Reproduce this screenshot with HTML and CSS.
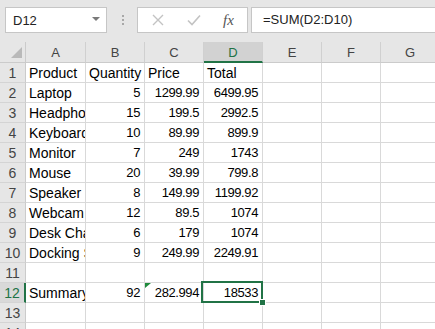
FILE: index.html
```html
<!DOCTYPE html>
<html>
<head>
    <title>Sheet</title>
    <link rel="stylesheet" href="styles.css">
</head>
<body>
    <div class="toolbar">
        <div class="name-box">
            <span>D12</span>
            <span class="drop"></span>
        </div>
        <div class="grip"><i></i><i></i><i></i></div>
        <div class="fx-buttons">
            <svg class="btn" width="14" height="14" viewBox="0 0 14 14"><path d="M2 2 L12 12 M12 2 L2 12" stroke="#c3c3c3" stroke-width="1.4" fill="none"/></svg>
            <svg class="btn" width="16" height="14" viewBox="0 0 16 14"><path d="M2 7.5 L6 11.5 L14 2.5" stroke="#c3c3c3" stroke-width="1.6" fill="none"/></svg>
            <span class="fx">fx</span>
        </div>
        <div class="formula">=SUM(D2:D10)</div>
    </div>

    <div class="sheet">
        <div class="corner"><span class="tri"></span></div>
        <div class="col-head">A</div>
        <div class="col-head">B</div>
        <div class="col-head">C</div>
        <div class="col-head selected">D</div>
        <div class="col-head">E</div>
        <div class="col-head">F</div>
        <div class="col-head">G</div>

        <div class="row-head">1</div>
        <div class="cell">Product</div><div class="cell">Quantity</div><div class="cell">Price</div><div class="cell">Total</div><div class="cell"></div><div class="cell"></div><div class="cell"></div>

        <div class="row-head">2</div>
        <div class="cell">Laptop</div><div class="cell num">5</div><div class="cell num">1299.99</div><div class="cell num">6499.95</div><div class="cell"></div><div class="cell"></div><div class="cell"></div>

        <div class="row-head">3</div>
        <div class="cell">Headphones</div><div class="cell num">15</div><div class="cell num">199.5</div><div class="cell num">2992.5</div><div class="cell"></div><div class="cell"></div><div class="cell"></div>

        <div class="row-head">4</div>
        <div class="cell">Keyboard</div><div class="cell num">10</div><div class="cell num">89.99</div><div class="cell num">899.9</div><div class="cell"></div><div class="cell"></div><div class="cell"></div>

        <div class="row-head">5</div>
        <div class="cell">Monitor</div><div class="cell num">7</div><div class="cell num">249</div><div class="cell num">1743</div><div class="cell"></div><div class="cell"></div><div class="cell"></div>

        <div class="row-head">6</div>
        <div class="cell">Mouse</div><div class="cell num">20</div><div class="cell num">39.99</div><div class="cell num">799.8</div><div class="cell"></div><div class="cell"></div><div class="cell"></div>

        <div class="row-head">7</div>
        <div class="cell">Speaker</div><div class="cell num">8</div><div class="cell num">149.99</div><div class="cell num">1199.92</div><div class="cell"></div><div class="cell"></div><div class="cell"></div>

        <div class="row-head">8</div>
        <div class="cell">Webcam</div><div class="cell num">12</div><div class="cell num">89.5</div><div class="cell num">1074</div><div class="cell"></div><div class="cell"></div><div class="cell"></div>

        <div class="row-head">9</div>
        <div class="cell">Desk Chair</div><div class="cell num">6</div><div class="cell num">179</div><div class="cell num">1074</div><div class="cell"></div><div class="cell"></div><div class="cell"></div>

        <div class="row-head">10</div>
        <div class="cell">Docking Station</div><div class="cell num">9</div><div class="cell num">249.99</div><div class="cell num">2249.91</div><div class="cell"></div><div class="cell"></div><div class="cell"></div>

        <div class="row-head">11</div>
        <div class="cell"></div><div class="cell"></div><div class="cell"></div><div class="cell"></div><div class="cell"></div><div class="cell"></div><div class="cell"></div>

        <div class="row-head selected">12</div>
        <div class="cell">Summary</div><div class="cell num">92</div><div class="cell num flagged">282.994</div><div class="cell num active">18533</div><div class="cell"></div><div class="cell"></div><div class="cell"></div>

        <div class="row-head">13</div>
        <div class="cell"></div><div class="cell"></div><div class="cell"></div><div class="cell"></div><div class="cell"></div><div class="cell"></div><div class="cell"></div>

        <div class="row-head">14</div>
        <div class="cell"></div><div class="cell"></div><div class="cell"></div><div class="cell"></div><div class="cell"></div><div class="cell"></div><div class="cell"></div>
    </div>
</body>
</html>
```

FILE: styles.css
```css
body {
    margin: 0;
    padding: 0;
    background-color: #ffffff;
    font-family: "Liberation Sans", Arial, sans-serif;
    overflow: hidden;
    width: 435px;
    height: 329px;
}
.toolbar {
    display: flex;
    align-items: center;
    height: 42px;
    padding: 0 0 0 5px;
    background-color: #e6e6e6;
    box-sizing: border-box;
}
.name-box {
    display: flex;
    align-items: center;
    justify-content: space-between;
    width: 102px;
    height: 26px;
    padding: 0 6px 0 7px;
    box-sizing: border-box;
    background-color: white;
    border: 1px solid #c6c6c6;
    font-size: 13px;
    color: #222;
    margin-top: -2px;
}
.name-box .drop {
    width: 0;
    height: 0;
    border-left: 4px solid transparent;
    border-right: 4px solid transparent;
    border-top: 4px solid #7a7a7a;
    margin-top: -3px;
}
.grip {
    display: flex;
    flex-direction: column;
    gap: 2px;
    margin: -2px 13px 0 15px;
}
.grip i {
    display: block;
    width: 2px;
    height: 2px;
    background-color: #a8a8a8;
}
.fx-buttons {
    display: flex;
    align-items: center;
    width: 111px;
    height: 26px;
    box-sizing: border-box;
    background-color: white;
    border: 1px solid #c6c6c6;
    margin-top: -2px;
}
.fx-buttons .btn:first-child {
    margin-left: 13px;
}
.fx-buttons .btn + .btn {
    margin-left: 21px;
}
.fx {
    font-family: "Liberation Serif", serif;
    font-style: italic;
    font-size: 15px;
    color: #555;
    margin-left: 21px;
}
.formula {
    flex: 1;
    height: 26px;
    margin: -2px 0 0 3px;
    padding-left: 11px;
    box-sizing: border-box;
    background-color: white;
    border: 1px solid #c6c6c6;
    border-right: none;
    font-size: 13px;
    line-height: 24px;
    color: #222;
}
.sheet {
    display: grid;
    grid-template-columns: 26px 60px repeat(6, 59px);
    grid-template-rows: 21px;
    grid-auto-rows: 20px;
    width: 440px;
}
.corner,
.col-head,
.row-head {
    background-color: #e6e6e6;
    box-sizing: border-box;
    border-right: 1px solid #cbcbcb;
    border-bottom: 1px solid #cbcbcb;
    color: #444;
    font-size: 13px;
    text-align: center;
}
.corner {
    position: relative;
}
.corner .tri {
    position: absolute;
    right: 3px;
    bottom: 4px;
    width: 0;
    height: 0;
    border-left: 11px solid transparent;
    border-bottom: 11px solid #b9b9b9;
}
.col-head {
    line-height: 22px;
    border-right-color: #d0d0d0;
}
.col-head.selected {
    background-color: #d2d2d2;
    color: #217346;
    border-bottom: 2px solid #217346;
}
.row-head {
    font-size: 14px;
    line-height: 20px;
    border-bottom-color: #d4d4d4;
}
.row-head.selected {
    background-color: #d9d9d9;
    color: #217346;
    border-right: 2px solid #217346;
}
.cell {
    box-sizing: border-box;
    border-right: 1px solid #d9d9d9;
    border-bottom: 1px solid #d9d9d9;
    padding: 0 3px;
    font-size: 14px;
    line-height: 20px;
    white-space: nowrap;
    overflow: hidden;
    color: #000;
}
.num {
    text-align: right;
    font-size: 13px;
    letter-spacing: -0.4px;
    padding-right: 4px;
}
.flagged,
.active {
    position: relative;
    overflow: visible;
}
.flagged::before {
    content: "";
    position: absolute;
    left: 0;
    top: 0;
    border-top: 5px solid #1f8a3c;
    border-right: 6px solid transparent;
}
.active::after {
    content: "";
    position: absolute;
    left: -3px;
    top: -2px;
    right: -1px;
    bottom: -1px;
    border: 2px solid #217346;
}
.active::before {
    content: "";
    position: absolute;
    right: -4px;
    bottom: -4px;
    width: 5px;
    height: 5px;
    background-color: #217346;
    border: 1px solid white;
    z-index: 1;
}
```
